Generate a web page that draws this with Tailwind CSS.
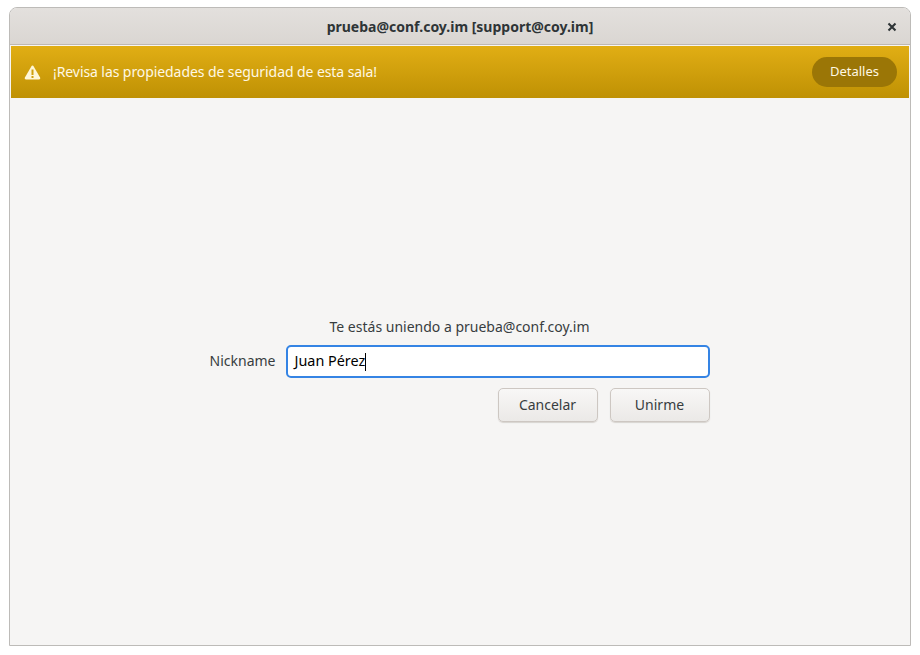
<!DOCTYPE html>
<html lang="es">
<head>
<meta charset="UTF-8">
<title>prueba@conf.coy.im [support@coy.im]</title>
<script src="https://cdn.jsdelivr.net/npm/@tailwindcss/browser@4"></script>
</head>
<body class="bg-white w-[920px] h-[655px] overflow-hidden font-['Noto_Sans',sans-serif] text-[14px] text-[#383d3f]">
  <div class="ml-[9px] mt-[7px] w-[902px] h-[639px] flex flex-col border border-[#bdbbb8] rounded-t-[8px] bg-[#f6f5f4] overflow-hidden">
    <header class="h-[37px] shrink-0 flex items-center relative border-b border-[#bfb8b1] bg-gradient-to-b from-[#e3e0dd] to-[#dad6d2]">
      <h1 class="w-full text-center font-bold text-[14px] text-[#2e3436]">prueba@conf.coy.im [support@coy.im]</h1>
      <svg class="absolute left-[877px] top-[14px]" width="10" height="10" viewBox="0 0 10 10"><path d="M1.5 1.500 L8.500 8.500 M8.500 1.500 L1.500 8.500" stroke="#2e3436" stroke-width="2.100" fill="none"/></svg>
    </header>
    <div class="mx-px mt-px h-[52px] shrink-0 flex items-center justify-between pl-[13px] pr-[12px] bg-gradient-to-b from-[#e1ae14] to-[#bf9104] text-[#fff8e4]">
      <div class="flex items-center gap-[12px]">
        <svg width="17" height="15" viewBox="0 0 16 15"><path d="M8 .6c-.5 0-.9.3-1.200.8L.4 12.600c-.5 1 .1 2 1.200 2h12.800c1.100 0 1.700-1 1.200-2L9.200 1.400C8.900.9 8.500.6 8 .6z" fill="#fff6d6"/><rect x="7" y="4.500" width="2" height="5.500" fill="#cf9f0d"/><rect x="7" y="11" width="2" height="2" fill="#cf9f0d"/></svg>
        <span class="text-[14px] tracking-[-0.08px] pb-[2px]">¡Revisa las propiedades de seguridad de esta sala!</span>
      </div>
      <button class="w-[85px] h-[30px] rounded-full bg-[#9b7606] text-[#fff8e4] text-[13px]">Detalles</button>
    </div>
    <main class="flex-1 flex flex-col items-center pt-[220px]">
      <p class="h-[20px] leading-[18px] ml-[-1px]">Te estás uniendo a prueba@conf.coy.im</p>
      <div class="w-[500px] ml-[-1px] mt-[7px] flex items-center">
        <label class="w-[77px] text-right pb-[2px]">Nickname</label>
        <div class="ml-[10px] w-[424px] h-[33px] shrink-0 flex items-center px-[7px] pb-[2px] bg-white border-2 border-[#3584e4] rounded-[5px] text-black text-[14.4px]">Juan Pérez<span class="w-px h-[18px] bg-black mt-[2px]"></span></div>
      </div>
      <div class="w-[500px] ml-[-1px] mt-[10px] flex justify-end gap-[12px]">
        <button class="w-[100px] h-[34px] pb-[2px] rounded-[5px] border border-[#cdc7c2] bg-gradient-to-b from-[#f8f7f6] to-[#ebe9e7] shadow-[0_1px_1px_#d8d4d0]">Cancelar</button>
        <button class="w-[100px] h-[34px] pb-[2px] rounded-[5px] border border-[#cdc7c2] bg-gradient-to-b from-[#f8f7f6] to-[#ebe9e7] shadow-[0_1px_1px_#d8d4d0]">Unirme</button>
      </div>
    </main>
  </div>
</body>
</html>
